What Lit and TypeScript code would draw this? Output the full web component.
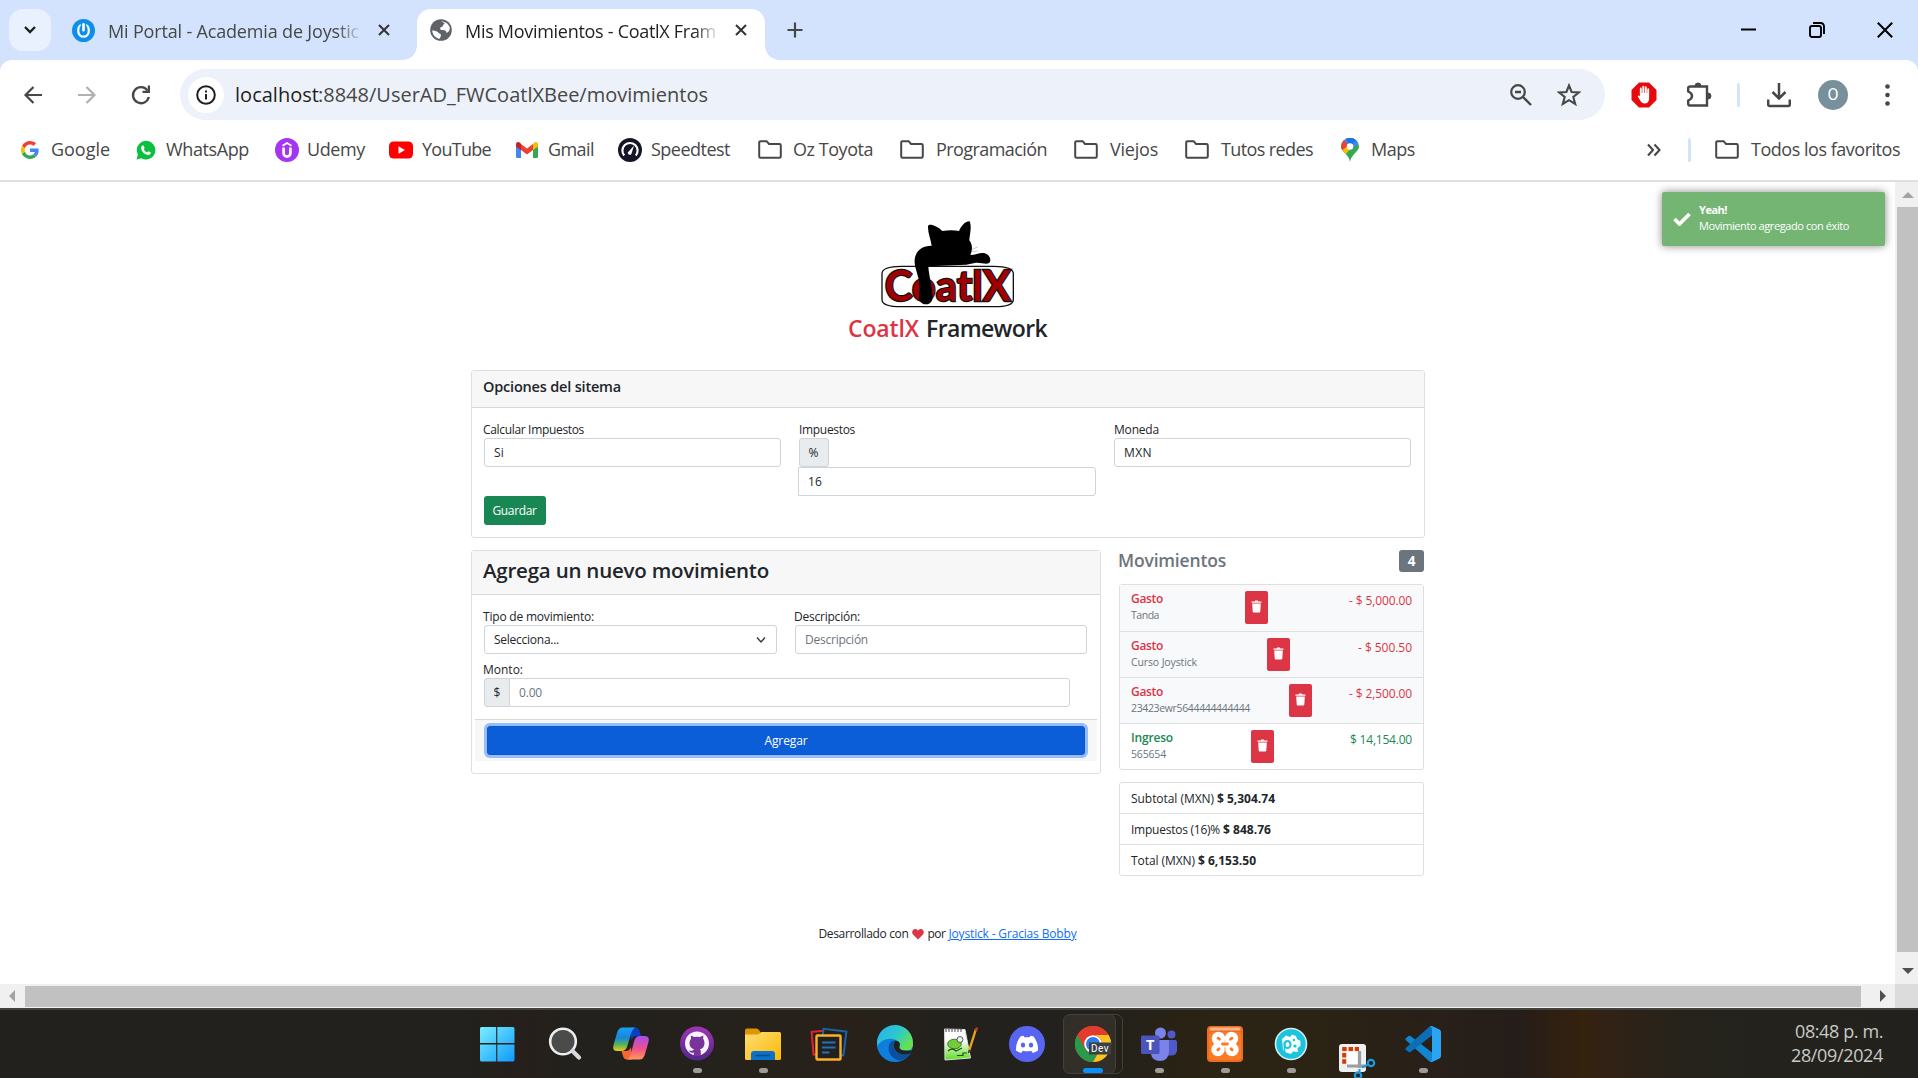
import { LitElement, html, svg, css } from "lit";
import { customElement, property } from "lit/decorators.js";

/** Single line of text whose tracking is adjusted so that it spans `w` pixels. */
@customElement("fit-text")
export class FitText extends LitElement {
  @property() text = "";
  @property({ type: Number }) w = 0;
  static styles = css`
    :host { display: inline-block; white-space: pre; margin-left: -1px; }
  `;
  firstUpdated() {
    const natural = this.getBoundingClientRect().width;
    if (this.w && this.text.length > 1) {
      this.style.letterSpacing = `${((this.w - natural) / this.text.length).toFixed(3)}px`;
    }
  }
  render() {
    return html`${this.text}`;
  }
}

const t = (text: string, w: number) => html`<fit-text .text=${text} .w=${w}></fit-text>`;

/* ---------- browser icons ---------- */
const closeX = html`<svg width="14" height="14" viewBox="0 0 14 14"><path d="M2 2L12 12M12 2L2 12" stroke="#333" stroke-width="2" fill="none"/></svg>`;
const folder = html`<svg width="24" height="24" viewBox="0 0 24 24"><path d="M1.2 4.5a1.3 1.3 0 0 1 1.3-1.3H8.6L11 6H21.4a1.4 1.4 0 0 1 1.4 1.4V18.400a1.400 1.400 0 0 1-1.400 1.400H2.600a1.400 1.400 0 0 1-1.400-1.400Z" fill="none" stroke="#474747" stroke-width="2"/></svg>`;
const icons: Record<string, unknown> = {
  google: html`<svg width="18" height="18" viewBox="0 0 48 48"><path fill="#EA4335" d="M24 9.500c3.540 0 6.710 1.220 9.210 3.600l6.850-6.850C35.900 2.380 30.470 0 24 0 14.620 0 6.510 5.380 2.560 13.220l7.980 6.190C12.430 13.720 17.740 9.500 24 9.500z"/><path fill="#4285F4" d="M46.980 24.550c0-1.570-.15-3.090-.38-4.550H24v9.020h12.940c-.58 2.960-2.260 5.480-4.780 7.180l7.730 6c4.510-4.180 7.090-10.360 7.090-17.650z"/><path fill="#FBBC05" d="M10.530 28.590c-.48-1.450-.76-2.990-.76-4.590s.27-3.140.76-4.590l-7.980-6.190C.92 16.460 0 20.120 0 24s.92 7.540 2.560 10.780l7.970-6.190z"/><path fill="#34A853" d="M24 48c6.480 0 11.930-2.130 15.890-5.810l-7.730-6c-2.150 1.450-4.920 2.300-8.160 2.300-6.260 0-11.570-4.220-13.470-9.910l-7.980 6.190C6.510 42.620 14.620 48 24 48z"/></svg>`,
  whatsapp: html`<svg width="20" height="20" viewBox="0 0 20 20"><path d="M0.500 19.500L1.900 14.600A9.300 9.300 0 1 1 5.400 18.200Z" fill="#0bbf3f"/><path d="M7.300 5.200L8.700 7.900L7.700 9.200Q8.900 11.500 11.100 12.400L12.400 11.200L15 12.600Q14.800 15 12.300 15Q6 14 5 7.700Q5.300 5.400 7.300 5.200Z" fill="#fff"/></svg>`,
  udemy: html`<svg width="24" height="24" viewBox="0 0 24 24"><circle cx="12" cy="12" r="12" fill="#a435f0"/><path d="M7.500 7.800L12 5L16.500 7.800" fill="none" stroke="#fff" stroke-width="1.900"/><path d="M8.600 9.600V15.200a3.400 3.400 0 0 0 6.800 0V9.600" fill="none" stroke="#fff" stroke-width="2.700"/></svg>`,
  youtube: html`<svg width="24" height="24" viewBox="0 0 24 24"><rect y="3.500" width="24" height="17" rx="4.500" fill="#f00"/><path d="M9.500 8.300L16 12L9.500 15.700Z" fill="#fff"/></svg>`,
  gmail: html`<svg width="22" height="16" viewBox="0 0 22 16"><path d="M0 2.500V14.500A1.500 1.500 0 0 0 1.500 16H5V6Z" fill="#4285f4"/><path d="M22 2.500V14.500A1.500 1.500 0 0 1 20.500 16H17V6Z" fill="#34a853"/><path d="M5 2L11 6.500L17 2V8L11 12.500L5 8Z" fill="#ea4335"/><path d="M0 2.500C0 0 2.500 -.5 4 .8L5 1.800V8L0 4.500Z" fill="#c5221f"/><path d="M22 2.500C22 0 19.500 -.5 18 .8L17 1.800V8L22 4.500Z" fill="#fbbc04"/></svg>`,
  speedtest: html`<svg width="24" height="24" viewBox="0 0 24 24"><circle cx="12" cy="12" r="12" fill="#141526"/><path d="M6.200 17.500A7.600 7.600 0 1 1 17.800 17.500" fill="none" stroke="#fff" stroke-width="2.200"/><path d="M9.600 14.800L16 7.500L13.300 16.200Q10.500 18 9.600 14.800Z" fill="#fff"/></svg>`,
  folder,
  maps: html`<svg width="18" height="24" viewBox="0 0 18 24"><clipPath id="pin"><path d="M9 24C8 19 6 17.500 3 14C1 12 0 10.500 0 8.500A9 8.500 0 0 1 18 8.500C18 10.500 17 12 15 14C12 17.500 10 19 9 24Z"/></clipPath><g clip-path="url(#pin)"><rect width="18" height="24" fill="#34a853"/><path d="M0 0H18V5L10 12L2 5Z" fill="#4285f4"/><path d="M0 2L3 2.500L9 8L3 15L0 13Z" fill="#ea4335"/><path d="M0 13L6 8.500L13 7L3 18Z" fill="#fbbc04"/><path d="M4 -1L18 0L9 8Z" fill="#1a73e8"/></g><circle cx="9" cy="8.500" r="3.200" fill="#fff"/></svg>`,
};

/* ---------- task bar icons ---------- */
const taskIcons: Record<string, unknown> = {
  start: svg`<defs><linearGradient id="w" x1="0" y1="0" x2="1" y2="1" gradientUnits="userSpaceOnUse" gradientTransform="scale(36)"><stop offset="0" stop-color="#7df1ff"/><stop offset="1" stop-color="#0c98fb"/></linearGradient></defs><g transform="translate(-2)"><path fill="url(#w)" d="M2.500 1H17.200V17H1V2.500A1.500 1.500 0 0 1 2.500 1ZM18.300 1H34A1.500 1.500 0 0 1 35.500 2.500V17H18.300ZM1 18.400H17.200V35.500H2.500A1.500 1.500 0 0 1 1 34ZM18.300 18.400H35.500V34A1.500 1.500 0 0 1 34 35.500H18.300Z"/></g>`,
  search: svg`<circle cx="16" cy="15.500" r="12.800" fill="#4b4b49" stroke="#eceef0" stroke-width="2.600"/><path d="M25.500 25L32 31.500" stroke="#d5dade" stroke-width="4.200" stroke-linecap="round"/>`,
  copilot: svg`<defs><linearGradient id="c1" x1="0" y1="0" x2="0" y2="1"><stop offset="0" stop-color="#17a0f5"/><stop offset=".45" stop-color="#1a86d8"/><stop offset=".75" stop-color="#5cb84c"/><stop offset="1" stop-color="#f5c81c"/></linearGradient><linearGradient id="c2" x1="0" y1="0" x2="0" y2="1"><stop offset="0" stop-color="#a24ff0"/><stop offset=".55" stop-color="#f0508c"/><stop offset="1" stop-color="#ff9a5a"/></linearGradient></defs><path d="M17 1.500H22Q25.500 1.500 26.500 5L28 10H23Q20 10 18.500 14Z" fill="#0a3fc4"/><path d="M19 33.500H14Q11 33.500 10 30L8.500 25H13Q16.500 25 18 21Z" fill="#f8652f"/><path d="M9.500 1.500H22.500Q19.500 2.500 18 8L14 21Q12.500 25 8.500 25H4Q-1 25 .5 19L4 7Q5.500 1.500 9.500 1.500Z" fill="url(#c1)"/><path d="M26.500 33.500H13.500Q16.500 32.500 18 27L21.500 14Q23 10 27 10H32Q37 10 35.500 16L32 28Q30.500 33.500 26.500 33.500Z" fill="url(#c2)"/>`,
  github: svg`<defs><linearGradient id="gh" x1="0" y1="0" x2="0" y2="1"><stop offset="0" stop-color="#a034b4"/><stop offset="1" stop-color="#54268a"/></linearGradient></defs><circle cx="18" cy="17.500" r="17" fill="url(#gh)"/><circle cx="18" cy="17.500" r="12" fill="#f6f3f9"/><path d="M14.800 30V26.500Q11 27.500 9.800 24.500Q12.500 25 13.200 24.800L15.200 23.300Q10.500 22.500 10.500 17Q10.500 14.500 12 12.800L11.800 9.500L15.300 11Q18 10.400 20.800 11L24.300 9.500L24.200 12.800Q25.500 14.500 25.500 17Q25.500 22.500 21 23.300L21.800 25V30Z" fill="#7a3399"/>`,
  explorer: svg`<defs><linearGradient id="fx" x1="0" y1="0" x2="1" y2="1"><stop offset="0" stop-color="#ffdc75"/><stop offset="1" stop-color="#fab903"/></linearGradient></defs><path d="M0 4.500Q0 2.500 2 2.500H11.500Q13 2.500 14 4L16 7V12H0Z" fill="#dd9800"/><path d="M0 8.500H13L16.500 6H34.500Q36 6 36 7.500V32.500Q36 34 34.500 34H1.500Q0 34 0 32.500Z" fill="url(#fx)"/><path d="M6 34V28Q6 25 9 25H27Q30 25 30 28V34Z" fill="#0b72c9"/><path d="M10.500 29.500H25.500" stroke="#064b8c" stroke-width="1.500"/>`,
  notes: svg`<g fill="none" stroke-width="2"><rect x="1.500" y="5" width="20" height="23" transform="rotate(-5 11 16)" stroke="#e0242c"/><rect x="11" y="4" width="23" height="24" fill="#22211d" transform="rotate(7 22 16)" stroke="#1a64ad"/><rect x="5.500" y="9.500" width="24" height="24" rx="1" fill="#22211d" stroke="#fbb02c" stroke-width="2.400"/><path d="M11 16.500H24.500M11 21.500H24.500M11 26.500H18.500" stroke="#2470bd"/></g>`,
  edge: svg`<defs><linearGradient id="e1" x1="0" y1="0" x2="1" y2=".6"><stop offset="0" stop-color="#2aaef4"/><stop offset=".55" stop-color="#2cc8ce"/><stop offset="1" stop-color="#66e250"/></linearGradient></defs><circle cx="18" cy="18" r="18" fill="#0f7fdd"/><path d="M0 16A18 18 0 0 1 36 18C36 24 31 25.500 27 24.500C22 23.500 21.500 22 22.500 20C23.500 17 21 13.500 15 13C8 12 1 17 0 21Z" fill="url(#e1)"/><path d="M13 17C9 24 14 34 24 34.500C29 33 32.500 29.500 33.500 27C27 30 20 27.500 17.500 22.500C15.500 19 16.500 16 18 14.500C15 14.500 14 15.500 13 17Z" fill="#0c4f9e"/><path d="M18.500 14.500C23 15.500 23.500 18 22.500 20.500C22 22.500 23.500 24 27 24.600L34.500 24.500L37 26L33.500 27C26 30.500 19 27 17 21.500C16 18.500 17 15.500 18.500 14.500Z" fill="#22211d"/>`,
  npp: svg`<defs><linearGradient id="np" x1="0" y1="0" x2="0" y2="1"><stop offset=".35" stop-color="#fff"/><stop offset="1" stop-color="#5bdc1c"/></linearGradient></defs><path d="M1.500 3L22 3.500L27.500 32L2 34Z" fill="url(#np)" stroke="#ddd" stroke-width="1"/><path d="M3 3V6M6 3V6M9 3V6M12 3V6M15 3V6M18 3V6" stroke="#444" stroke-width="1"/><ellipse cx="11.500" cy="18" rx="6.800" ry="4.800" fill="#6fce3a" stroke="#2b641a" stroke-width=".8"/><circle cx="17" cy="13.500" r="3" fill="#eee" stroke="#333" stroke-width=".8"/><path d="M5 25Q9 21 13 25L19 22M14 29.500H20V27H24" stroke="#254d17" stroke-width="1.200" fill="none"/><path d="M33 3L26 25" stroke="#e9a31c" stroke-width="2.400"/><path d="M34 1.500L33 5" stroke="#c33c28" stroke-width="2.400"/><path d="M26.500 24L25.500 27" stroke="#333" stroke-width="1.500"/>`,
  discord: svg`<circle cx="18" cy="18" r="18" fill="#5865f2"/><path d="M11.500 10.500Q13 10 14.500 9.800L15.500 11.200H20.500L21.500 9.800Q23 10 24.600 10.500Q29.500 17 29 24.500Q26.500 26.300 23.800 27L22.200 24.700Q18 25.700 13.800 24.700L12.200 27Q9.500 26.300 7 24.500Q6.500 17 11.500 10.500Z" fill="#fff"/><ellipse cx="14" cy="19" rx="2.200" ry="2.500" fill="#5865f2"/><ellipse cx="22" cy="19" rx="2.200" ry="2.500" fill="#5865f2"/>`,
  chrome: svg`<circle cx="18" cy="18" r="18" fill="#ea4335"/><path d="M2.400 9A18 18 0 0 0 18 36L25.800 22.500A9 9 0 0 1 10.200 22.500Z" fill="#299a4b"/><path d="M33.600 9A18 18 0 0 1 18 36L25.800 22.500A9 9 0 0 0 18 9Z" fill="#fcc21f"/><path d="M2.400 9A18 18 0 0 1 33.600 9H18A9 9 0 0 0 10.200 13.500L9.700 21.700Z" fill="#e33b2e"/><circle cx="18" cy="18" r="8.800" fill="#fff"/><circle cx="18" cy="18" r="7" fill="#2f7de9"/><rect x="14" y="16.500" width="22" height="12" fill="#3c4043"/><text x="16" y="26.300" font-size="10" font-family="Roboto, sans-serif" textLength="17.500" fill="#fff">Dev</text>`,
  teams: svg`<circle cx="19.500" cy="7" r="5.500" fill="#7b83eb"/><circle cx="30.500" cy="8.500" r="4" fill="#5059c9"/><path d="M24 14H34Q36 14 36 16V24Q36 29.500 30 29.500H25Z" fill="#5059c9"/><path d="M10 14H28V26Q27 35 19 35Q11 35 10 28Z" fill="#7b83eb"/><rect x="0" y="9.500" width="18.500" height="18.500" rx="1.500" fill="#4b53bc"/><text x="9.200" y="24" font-size="14.500" font-weight="700" text-anchor="middle" font-family="Open Sans, sans-serif" fill="#fff">T</text>`,
  xampp: svg`<rect width="36" height="36" rx="4" fill="#ee6c22"/><rect x="2.500" y="1.500" width="31" height="3" rx="1.500" fill="#f9b58d"/><rect x="2" y="6" width="32" height="28" rx="3" fill="#fb7a24"/><g fill="#fff"><circle cx="11.500" cy="12.500" r="6.700"/><circle cx="24.500" cy="12.500" r="6.700"/><circle cx="11" cy="23.500" r="6.700"/><circle cx="25" cy="23.500" r="6.700"/><path d="M11 13L18 15.500L25 13V24L18 21.500L11 24Z"/></g><g fill="none" stroke="#fb7a24" stroke-width="2.800" stroke-linecap="round"><path d="M11 12.200L12.500 13.200M25 12.200L23.500 13.200M10.800 23.800L12 22.800M25.200 23.800L24 22.800M15.500 18H20.500"/></g>`,
  gear: svg`<circle cx="18" cy="18" r="15.500" fill="#1cc3dc" stroke="#d4eff2" stroke-width="1.600"/><path d="M9 13L13 9.500L17 11L19 8.500L23 10L24 13L27.500 15V20L24.500 22L25 26L20 25.500L18 28L13 26.500L10 24Z" fill="#f4fcfd"/><ellipse cx="14.500" cy="18.500" rx="3" ry="3.600" fill="none" stroke="#1cc3dc" stroke-width="2"/><path d="M11.500 16V27" stroke="#1cc3dc" stroke-width="1.600"/><circle cx="21" cy="14" r="1.200" fill="#1cc3dc"/><circle cx="22" cy="20" r="1.600" fill="#1cc3dc"/>`,
  snip: svg`<rect x="0" y="4" width="27" height="28" rx="3" fill="#eef0f2"/><path d="M3.200 9H20" stroke="#d83b01" stroke-width="4" stroke-dasharray="4.500 1.800" fill="none"/><path d="M5.200 13V24" stroke="#d83b01" stroke-width="4" stroke-dasharray="4.500 1.800" fill="none"/><rect x="8.500" y="12.500" width="12" height="13" fill="#fff"/><path d="M20.500 11V28M8 26H27" stroke="#9a9da1" stroke-width="3.200"/><circle cx="32" cy="23" r="3.200" fill="none" stroke="#1d9be0" stroke-width="2.200"/><circle cx="19" cy="35.500" r="3.200" fill="none" stroke="#1d9be0" stroke-width="2.200"/><path d="M23 27.500L29 24.500M20.500 29V33" stroke="#1d9be0" stroke-width="2"/>`,
  vscode: svg`<path d="M.5 12.500L3.500 10Q4.500 9.500 5.500 10L27 26.500V35.500Q25.500 36.300 24 35L1 14.200Q0 13.300 .5 12.500Z" fill="#0f86cf"/><path d="M.5 23.500L3.500 26Q4.500 26.500 5.500 26L27 9.500V.5Q25.500 -.3 24 1L1 21.800Q0 22.700 .5 23.500Z" fill="#0a6fb5"/><path d="M25.500 .3Q26.500 -.2 27.500 .3L34.500 3.500Q36 4.300 36 6V30Q36 31.700 34.500 32.500L27.500 35.700Q26 36.300 24.800 35.200Q27 35.500 27 33V3Q27 .7 24.800 1Z" fill="#2aa5f2"/>`,
};

const bookmarks = [
  ["google", "Google", 31, 58], ["whatsapp", "WhatsApp", 31, 82], ["udemy", "Udemy", 33, 57],
  ["youtube", "YouTube", 34, 68], ["gmail", "Gmail", 33, 45], ["speedtest", "Speedtest", 34, 78],
  ["folder", "Oz Toyota", 36, 79], ["folder", "Programación", 37, 110], ["folder", "Viejos", 37, 47],
  ["folder", "Tutos redes", 37, 91], ["maps", "Maps", 31, 43],
] as [string, string, number, number][];

const moves = [
  { kind: "Gasto", desc: "Tanda", dw: 28, amount: "- $ 5,000.00", aw: 62, out: true },
  { kind: "Gasto", desc: "Curso Joystick", dw: 66, amount: "- $ 500.50", aw: 53, out: true },
  { kind: "Gasto", desc: "23423ewr5644444444444", dw: 119, amount: "- $ 2,500.00", aw: 62, out: true },
  { kind: "Ingreso", desc: "565654", dw: 35, amount: "$ 14,154.00", aw: 61, out: false },
];

const totals = [
  ["Subtotal (MXN)", 83, "$ 5,304.74", 58],
  ["Impuestos (16)%", 89, "$ 848.76", 48],
  ["Total (MXN)", 64, "$ 6,153.50", 58],
] as [string, number, string, number][];

@customElement("browser-chrome")
export class BrowserChrome extends LitElement {
  static styles = css`
    :host { display: block; color: #474747; font: 18px/24px "Open Sans", "Noto Sans", sans-serif; }
    svg { display: block; flex: none; }
    .strip { height: 60px; background: #d3e3fd; display: flex; align-items: center; padding-left: 9px; box-sizing: border-box; }
    .search { width: 42px; height: 42px; border-radius: 14px; background: #e9f1fe; display: grid; place-items: center; }
    .tab { display: flex; align-items: center; }
    .title { overflow: hidden; -webkit-mask-image: linear-gradient(to right, #000 91%, transparent 101%); padding-left: 1px; }
    .tab.idle { width: 366px; padding-left: 21px; box-sizing: border-box; }
    .idle .title { width: 251px; margin: 2px 17px 0 13px; }
    .tab.active { position: relative; background: #fff; width: 348px; height: 51px; margin-top: 9px; border-radius: 14px 14px 0 0; padding: 0 0 9px 13px; box-sizing: border-box; color: #1f1f1f; }
    .active .title { width: 251px; margin: 2px 17px 0 13px; }
    .active::before, .active::after { content: ""; position: absolute; bottom: 0; width: 14px; height: 14px; }
    .active::before { left: -14px; background: radial-gradient(circle at 0 0, transparent 13.500px, #fff 14px); }
    .active::after { right: -14px; background: radial-gradient(circle at 100% 0, transparent 13.500px, #fff 14px); }
    .plus { margin-left: 22px; }
    .win { margin-left: auto; display: flex; gap: 52px; padding-right: 25px; }
    .under { background: #d3e3fd; }
    .bar { height: 60px; background: #fff; border-radius: 12px 12px 0 0; display: flex; align-items: center; padding-left: 21px; box-sizing: border-box; }
    .nav { display: flex; gap: 30px; width: 159px; }
    .omni { width: 1425px; height: 51px; margin-top: 9px; border-radius: 26px; background: #edf1fa; display: flex; align-items: center; padding-left: 8px; box-sizing: border-box; font-size: 20px; }
    .bar > :not(.omni) { margin-top: 9px; }
    .info { width: 36px; height: 36px; border-radius: 50%; background: #fff; display: grid; place-items: center; margin-right: 12px; }
    .host { color: #1f1f1f; }
    .omni .tools { margin-left: auto; display: flex; gap: 24px; padding-right: 24px; align-items: center; }
    .ext { display: flex; align-items: center; }
    .ext .stop { margin-left: 26px; }
    .ext .puzzle { margin-left: 30px; }
    .sep { width: 3px; height: 24px; border-radius: 2px; background: #d3e3fd; }
    .ext .sep { margin: 0 27px 0 25px; }
    .avatar { width: 30px; height: 30px; border-radius: 50%; background: #78909c; color: #fff; font: 16px/30px Roboto, sans-serif; text-align: center; margin: 0 37px 0 27px; }
    .marks { height: 60px; background: #fff; border-bottom: 2px solid #dfdfdf; display: flex; align-items: center; padding-left: 21px; }
    .marks fit-text { margin-top: -2px; }
    .list { display: grid; grid-template-columns: 115px 139px 114px 127px 102px 140px 142px 174px 111px 156px 80px; width: 1626px; }
    .mark { display: grid; align-items: center; justify-content: start; }
    .c31 { grid-template-columns: 31px auto; }
    .c33 { grid-template-columns: 33px auto; }
    .c34 { grid-template-columns: 34px auto; }
    .c36 { grid-template-columns: 36px auto; }
    .c37 { grid-template-columns: 37px auto; }
    .all { margin-left: 24px; display: flex; align-items: center; gap: 13px; }
    .marks .sep { margin-left: 27px; }
  `;
  render() {
    return html`
      <div class="strip">
        <div class="search"><svg width="14" height="10" viewBox="0 0 14 10"><path d="M2 2L7 7L12 2" fill="none" stroke="#1f1f1f" stroke-width="2.400"/></svg></div>
        <div class="tab idle">
          <svg width="23" height="23" viewBox="0 0 23 23"><circle cx="11.500" cy="11.500" r="11.500" fill="#0d8eea"/><rect x="6.300" y="5.300" width="10.400" height="12.400" rx="5.200" fill="none" stroke="#fff" stroke-width="2.200"/><rect x="8.700" y="3.500" width="5.600" height="9.500" fill="#0d8eea"/><rect x="10.200" y="4" width="2.600" height="8.500" rx="1.200" fill="#fff"/></svg>
          <div class="title">${t("Mi Portal - Academia de Joystic", 251)}</div>${closeX}
        </div>
        <div class="tab active">
          <svg width="22" height="22" viewBox="0 0 22 22"><circle cx="11" cy="11" r="10.800" fill="#5f6368"/><path d="M11 2C13 3 14.500 2.500 14.500 4.500C12.500 5 13.500 7 11.500 7.500C9.500 8 10 10 11.500 10.500C14 10 17 11 16.500 13.500C19 12.500 20 10 19.800 8C18.500 4 15 1.800 11 2Z" fill="#fff" transform="translate(0,.5)"/><path d="M2.200 11.500C5 11.500 8.500 12.500 9 14.500C11.500 14.500 11.500 17 9.500 19.800C5.500 19 2.500 16 2.200 11.500Z" fill="#fff"/></svg>
          <div class="title">${t("Mis Movimientos - CoatlX Fram", 251)}</div>${closeX}
        </div>
        <svg class="plus" width="16" height="16" viewBox="0 0 16 16"><path d="M8 .5V15.500M.5 8H15.500" stroke="#474747" stroke-width="2.200"/></svg>
        <div class="win">
          <svg width="16" height="16" viewBox="0 0 16 16"><path d="M0 7.500H15" stroke="#000" stroke-width="2"/></svg>
          <svg width="16" height="16" viewBox="0 0 16 16"><rect x="1" y="4" width="11" height="11" rx="2" fill="none" stroke="#000" stroke-width="1.900"/><path d="M4 1H11.500Q15 1 15 4.500V12" fill="none" stroke="#000" stroke-width="1.900"/></svg>
          <svg width="16" height="16" viewBox="0 0 16 16"><path d="M.8 .8L15.200 15.200M15.200 .8L.8 15.200" stroke="#000" stroke-width="2"/></svg>
        </div>
      </div>
      <div class="under"><div class="bar">
        <div class="nav">
          <svg width="24" height="24" viewBox="0 0 24 24"><path d="M21 12H5M12.500 4L4.500 12L12.500 20" fill="none" stroke="#474747" stroke-width="2.200"/></svg>
          <svg width="24" height="24" viewBox="0 0 24 24"><path d="M3 12H19M11.500 4L19.500 12L11.500 20" fill="none" stroke="#b0b0b0" stroke-width="2.200"/></svg>
          <svg width="24" height="24" viewBox="0 0 24 24"><path d="M18.500 7.500A8 8 0 1 0 19.800 14" fill="none" stroke="#474747" stroke-width="2.300"/><path d="M21 2.500V10H13.500V7.800H18.800V2.500Z" fill="#474747"/></svg>
        </div>
        <div class="omni">
          <div class="info"><svg width="20" height="20" viewBox="0 0 20 20"><circle cx="10" cy="10" r="8.800" fill="none" stroke="#1f1f1f" stroke-width="2"/><path d="M10 9V14.500M10 5.500V7.500" stroke="#1f1f1f" stroke-width="2"/></svg></div>
          <span class="host">${t("localhost", 84)}</span>${t(":8848/UserAD_FWCoatlXBee/movimientos", 390)}
          <div class="tools">
            <svg width="24" height="24" viewBox="0 0 24 24"><circle cx="9" cy="9" r="6.800" fill="none" stroke="#474747" stroke-width="2.200"/><path d="M14 14L22 22M6 9H12" stroke="#474747" stroke-width="2.400"/></svg>
            <svg width="24" height="24" viewBox="0 0 24 24"><path d="M12 2.500L14.600 9L21.800 9.500L16.300 14L18.200 21L12 17.200L5.800 21L7.700 14L2.200 9.500L9.400 9Z" fill="none" stroke="#474747" stroke-width="2.100"/></svg>
          </div>
        </div>
        <div class="ext">
          <svg class="stop" width="26" height="26" viewBox="0 0 26 26"><path d="M8 .5H18L25.500 8V18L18 25.500H8L.5 18V8Z" fill="#e8090c"/><path d="M9.800 12V6.500M12.300 11V4.800M14.800 11V5.200M17.200 12V7.300" fill="none" stroke="#fff" stroke-width="1.900" stroke-linecap="round"/><path d="M8.900 11H18.100V17Q17.500 21.500 13.500 21.500Q11 21.500 9.800 19.500L6.800 14.500Q6.800 13.200 8 13.500L8.900 14.500Z" fill="#fff"/></svg>
          <svg class="puzzle" width="25" height="26" viewBox="0 0 25 26"><path d="M3.500 4.500H20V23.500H3.500Q1.200 23.500 1.200 22V18.500Q5 17 5 14Q5 11 1.200 9.500V6Q1.200 4.500 3.500 4.500Z" fill="none" stroke="#474747" stroke-width="2.400"/><path d="M8 4A3 3 0 0 1 14 4ZM21 11A3 3 0 0 1 21 17Z" fill="#474747" stroke="#474747" stroke-width="1"/></svg>
          <div class="sep"></div>
          <svg width="24" height="26" viewBox="0 0 24 26"><path d="M12 1V15M5.500 10L12 16.500L18.500 10M1.200 17.500V22.500Q1.200 24 2.700 24H21.300Q22.800 24 22.800 22.500V17.500" fill="none" stroke="#474747" stroke-width="2.500"/></svg>
          <div class="avatar">O</div>
          <svg width="5" height="22" viewBox="0 0 5 22"><g fill="#474747"><circle cx="2.500" cy="2.500" r="2.300"/><circle cx="2.500" cy="11" r="2.300"/><circle cx="2.500" cy="19.500" r="2.300"/></g></svg>
        </div>
      </div></div>
      <div class="marks">
        <div class="list">${bookmarks.map(([i, name, off, w]) => html`<div class="mark c${off}">${icons[i]}${t(name, w + 1)}</div>`)}</div>
        <svg width="14" height="14" viewBox="0 0 14 14"><path d="M1 1.500L6 7L1 12.500M7.500 1.500L12.500 7L7.500 12.500" fill="none" stroke="#474747" stroke-width="2.100"/></svg>
        <div class="sep"></div>
        <div class="all">${folder}${t("Todos los favoritos", 149)}</div>
      </div>`;
  }
}

@customElement("movements-page")
export class MovementsPage extends LitElement {
  static styles = css`
    :host { display: block; background: #fff; color: #212529; font: 12px/18px "Open Sans", "Noto Sans", sans-serif; position: relative; width: 1895px; height: 802px; box-sizing: border-box; padding: 34px 470px 0 471px; overflow: hidden; }
    svg { display: block; }
    .brand { display: flex; flex-direction: column; align-items: center; height: 154px; }
    .brand svg { overflow: visible; }
    .brand h1 { margin: 3px 0 0; font-size: 23px; line-height: 32px; font-weight: 600; }
    .brand .red { color: #dc3545; margin-right: 8px; }
    .card { border: 1px solid #dfdfdf; border-radius: 3px; box-sizing: border-box; }
    .head { background: #f7f7f7; border-bottom: 1px solid #d9d9d9; padding: 0 12px; font-weight: 600; box-sizing: border-box; }
    .options { height: 168px; }
    .options .head { height: 37px; line-height: 31px; font-size: 14.500px; }
    .cols { display: grid; grid-template-columns: 297px 299px 297px; column-gap: 17px; padding: 13px 0 0 12px; align-items: start; }
    label { display: block; height: 17px; line-height: 18px; }
    .field { border: 1px solid #ced4da; border-radius: 3px; height: 29px; box-sizing: border-box; padding: 0 9px 0 10px; line-height: 27px; background: #fff; display: flex; justify-content: space-between; align-items: center; }
    .hint { color: #6c757d; }
    .addon { background: #e9ecef; border: 1px solid #ced4da; border-radius: 3px; height: 29px; box-sizing: border-box; line-height: 27px; text-align: center; }
    .pct { width: 30px; margin-left: 1px; }
    .cols .two label { padding-left: 2px; }
    .cols .three label { padding-left: 1px; }
    .two .field { border-radius: 0 3px 3px 0; width: 298px; }
    .save { display: inline-block; background: #198754; color: #fff; border-radius: 3px; height: 29px; line-height: 29px; width: 62px; margin-left: 12px; text-align: center; }
    .main { display: grid; grid-template-columns: 630px 305px; column-gap: 18px; margin-top: 12px; align-items: start; }
    .add { height: 224px; }
    .add .head { height: 44px; font-size: 20.500px; line-height: 38px; }
    .pair { display: grid; grid-template-columns: 293px 292px; column-gap: 18px; padding: 13px 0 0 12px; }
    .amount { padding: 7px 0 0 12px; }
    .group { display: flex; width: 586px; }
    .group .addon { width: 26px; border-radius: 3px 0 0 3px; }
    .group .field { flex: 1; margin-left: -1px; border-radius: 0 3px 3px 0; }
    .foot { margin: 12px 3px 0; height: 42px; background: #f7f7f7; border-top: 1px solid #d9d9d9; box-sizing: border-box; padding: 6px 12px; }
    .go { height: 29px; background: #0b5ed7; color: #fff; text-align: center; border-radius: 3px; box-shadow: 0 0 0 3px #94bdfb; border: 1px solid #0a58ca; box-sizing: border-box; line-height: 27px; padding-left: 1px; }
    .mhead { display: flex; justify-content: space-between; height: 22px; margin-bottom: 12px; color: #6c757d; font-size: 17.500px; line-height: 20px; font-weight: 600; }
    .badge { background: #6c757d; color: #fff; width: 25px; border-radius: 3px; text-align: center; font-size: 13.500px; font-weight: 700; line-height: 22px; }
    .list { border: 1px solid #dfdfdf; border-radius: 3px; }
    .row { height: 46px; box-sizing: border-box; border-top: 1px solid #dfdfdf; padding: 6px 12px 0; display: flex; justify-content: space-between; align-items: flex-start; }
    .row:first-child { border-top: 0; }
    .row.out { background: #f8f9fa; color: #dc3545; }
    .row.in { color: #198754; }
    .kind { display: block; font-weight: 600; height: 17px; line-height: 16px; }
    .desc { display: block; color: #6c757d; font-size: 10.500px; line-height: 14px; }
    .trash { width: 23px; height: 33px; background: #dc3545; border-radius: 2px; display: flex; justify-content: center; padding-top: 9px; box-sizing: border-box; }
    .sum { line-height: 20px; margin-right: -1px; }
    .totals { margin-top: 12px; }
    .total { height: 31px; box-sizing: border-box; border-top: 1px solid #dfdfdf; padding: 0 12px; line-height: 31px; display: flex; gap: 4px; }
    .total:first-child { border-top: 0; height: 30px; line-height: 31px; }
    b { font-weight: 700; }
    .credits { display: flex; justify-content: center; align-items: center; gap: 4px; margin-top: 49px; }
    .credits a { color: #0d6efd; }
    .credits a fit-text { text-decoration: underline; }
    .toast { position: absolute; left: 1662px; top: 10px; width: 223px; height: 54px; border-radius: 2px; background: #74b574; box-shadow: 0 0 9px #888; color: #fff; display: flex; align-items: center; font-size: 11px; line-height: 16px; }
    .toast svg { margin: 0 9px 0 11px; }
    .toast .msg { margin-top: -2px; }
    .toast .msg div { height: 16px; }
  `;
  render() {
    return html`
      <div class="brand">
        <svg width="146" height="93" viewBox="166 49 438 279">
          <path d="M187 222Q187 200 245 200H523Q581 200 581 222V300Q581 321 523 321H245Q187 321 187 300Z" fill="#fff" stroke="#111" stroke-width="4"/>
          <text x="195" y="304" textLength="378" lengthAdjust="spacingAndGlyphs" font-size="124" font-weight="700" font-family="Lato, Open Sans, sans-serif" fill="#a00000" stroke="#111" stroke-width="7" paint-order="stroke">CoatlX</text>
          <path d="M287 202C278 165 298 138 336 138C333 118 324 100 325 80C328 70 350 78 368 94C386 91 404 91 418 94C424 80 436 64 450 65C457 82 450 105 449 122C459 134 459 152 452 166C468 166 480 158 493 160C512 164 516 184 508 190C498 196 480 186 465 190L440 195L326 200C328 235 341 270 338 300C332 318 308 318 301 304C295 288 304 255 296 235Z" fill="#000"/>
          <path d="M455 150L474 142M456 156L474 154" stroke="#999" stroke-width="1.500"/>
        </svg>
        <h1><span class="red">${t("CoatlX", 71)}</span>${t("Framework", 121)}</h1>
      </div>
      <section class="card options">
        <div class="head">${t("Opciones del sitema", 138)}</div>
        <div class="cols">
          <div><label>${t("Calcular Impuestos", 101)}</label><div class="field">${t("Si", 10)}</div></div>
          <div class="two"><label>${t("Impuestos", 56)}</label><div class="addon pct">${t("%", 10)}</div><div class="field">${t("16", 14)}</div></div>
          <div class="three"><label>${t("Moneda", 45)}</label><div class="field">${t("MXN", 28)}</div></div>
        </div>
        <div class="save">${t("Guardar", 44)}</div>
      </section>
      <div class="main">
        <section class="card add">
          <div class="head">${t("Agrega un nuevo movimiento", 286)}</div>
          <div class="pair">
            <div><label>${t("Tipo de movimiento:", 111)}</label><div class="field">${t("Selecciona...", 65)}<svg width="12" height="12" viewBox="0 0 12 12"><path d="M2 3.500L6 8L10 3.500" fill="none" stroke="#343a40" stroke-width="1.400"/></svg></div></div>
            <div><label>${t("Descripción:", 66)}</label><div class="field hint">${t("Descripción", 63)}</div></div>
          </div>
          <div class="amount"><label>${t("Monto:", 40)}</label>
            <div class="group"><div class="addon">$</div><div class="field hint">${t("0.00", 23)}</div></div>
          </div>
          <div class="foot"><div class="go">${t("Agregar", 43)}</div></div>
        </section>
        <aside>
          <div class="mhead">${t("Movimientos", 108)}<span class="badge">4</span></div>
          <div class="list">${moves.map((m) => html`
            <div class="row ${m.out ? "out" : "in"}">
              <div><span class="kind">${t(m.kind, m.out ? 32 : 42)}</span><span class="desc">${t(m.desc, m.dw)}</span></div>
              <div class="trash"><svg width="11" height="13" viewBox="0 0 11 13"><path d="M.5 1.500H3.500L4.300 .5H6.700L7.500 1.500H10.500V2.800H.5ZM1.200 3.600H9.800L9.300 11.500Q9.200 12.500 8.200 12.500H2.800Q1.800 12.500 1.700 11.500Z" fill="#fff"/></svg></div>
              <span class="sum">${t(m.amount, m.aw + 1)}</span>
            </div>`)}</div>
          <div class="list totals">${totals.map(([l, lw, v, vw]) => html`<div class="total"><span>${t(l, lw)}</span><b>${t(v, vw)}</b></div>`)}</div>
        </aside>
      </div>
      <div class="credits">${t("Desarrollado con", 90)}
        <svg width="12" height="12" viewBox="0 0 12 12"><path d="M6 11.500L1 6.500Q-.5 4.300 .8 2.200Q3.200 -.3 6 2.500Q8.800 -.3 11.200 2.200Q12.500 4.300 11 6.500Z" fill="#dc3545"/></svg>
        ${t("por", 18)}<a>${t("Joystick - Gracias Bobby", 128)}</a></div>
      <div class="toast">
        <svg width="18" height="14" viewBox="0 0 18 14"><path d="M1.500 7L6.500 12L16.500 2" fill="none" stroke="#fff" stroke-width="3.600"/></svg>
        <div class="msg"><div><b>${t("Yeah!", 28)}</b></div><div>${t("Movimiento agregado con éxito", 150)}</div></div>
      </div>`;
  }
}

@customElement("task-bar")
export class TaskBar extends LitElement {
  static styles = css`
    :host { display: flex; height: 70px; box-sizing: border-box; border-top: 2px solid #41413d; color: #c9c9c6; font: 18px/25px "Open Sans", "Noto Sans", sans-serif;
      background: linear-gradient(to right, #22211d 0, #22211d 24%, #261f1b 27%, #22211d 30%, #28211a 45%, #22211d 50%, #22211d 57%, #2b2313 63%, #2b2313 68%, #282019 75%, #241d19 79%, #35220f 82.500%, #302215 84%, #25231c 88%, #22211d 100%); }
    .apps { display: flex; padding-left: 466px; width: 990px; }
    .app { width: 66px; display: flex; flex-direction: column; align-items: center; padding-top: 16px; position: relative; }
    .app svg { display: block; overflow: visible; width: 36px; height: 36px; position: relative; z-index: 1; }
    .low svg { margin-top: 14px; }
    .dot { width: 9px; height: 5px; border-radius: 3px; background: #9d9c98; margin-top: 6px; position: relative; z-index: 1; }
    .on .dot { width: 20px; background: #0a90fa; }
    .on::before, .on::after { content: ""; position: absolute; top: 4px; height: 60px; border-radius: 7px; box-sizing: border-box; border: 1px solid #44403a; }
    .on::before { left: 10px; width: 53px; }
    .on::after { left: 3px; width: 53px; background: #322e28; }
    .clock { margin-left: auto; padding: 9px 35px 0 0; text-align: right; }
    .clock div { height: 24px; }
  `;
  render() {
    const running = ["github", "explorer", "chrome", "teams", "xampp", "gear", "vscode"];
    return html`
      <div class="apps">${Object.keys(taskIcons).map((n) => html`
        <div class="app ${n === "chrome" ? "on" : n === "snip" ? "low" : ""}">
          <svg viewBox="0 0 36 36">${taskIcons[n]}</svg>${running.includes(n) ? html`<div class="dot"></div>` : ""}
        </div>`)}</div>
      <div class="clock"><div>${t("08:48 p. m.", 88)}</div><div>${t("28/09/2024", 92)}</div></div>`;
  }
}

@customElement("app-root")
export class AppRoot extends LitElement {
  static styles = css`
    :host { display: block; width: 1918px; height: 1078px; overflow: hidden; background: #fff; }
    .view { display: grid; grid-template-columns: 1895px 23px; height: 802px; }
    .v { background: #f0f0f0; display: flex; flex-direction: column; align-items: center; padding: 10px 0 0 2px; box-sizing: border-box; height: 802px; }
    .v .thumb { background: #c1c1c1; width: 21px; height: 745px; margin: 9px 0 16px; }
    .h { height: 24px; display: flex; align-items: center; background: #f0f0f0; }
    .h .thumb { background: #c1c1c1; width: 1836px; height: 21px; margin: 1px 19px 0 10px; }
    .h .left { margin-left: 9px; }
    .corner { width: 23px; height: 24px; background: #dcdcdc; margin-left: auto; }
    svg { display: block; flex: none; }
  `;
  render() {
    return html`
      <browser-chrome></browser-chrome>
      <div class="view">
        <movements-page></movements-page>
        <div class="v">
          <svg width="12" height="6" viewBox="0 0 12 6"><path d="M6 0L12 6H0Z" fill="#a3a3a3"/></svg>
          <div class="thumb"></div>
          <svg width="12" height="6" viewBox="0 0 12 6"><path d="M0 0H12L6 6Z" fill="#505050"/></svg>
        </div>
      </div>
      <div class="h">
        <svg class="left" width="6" height="12" viewBox="0 0 6 12"><path d="M6 0V12L0 6Z" fill="#a3a3a3"/></svg>
        <div class="thumb"></div>
        <svg width="6" height="12" viewBox="0 0 6 12"><path d="M0 0L6 6L0 12Z" fill="#505050"/></svg>
        <div class="corner"></div>
      </div>
      <task-bar></task-bar>`;
  }
}
